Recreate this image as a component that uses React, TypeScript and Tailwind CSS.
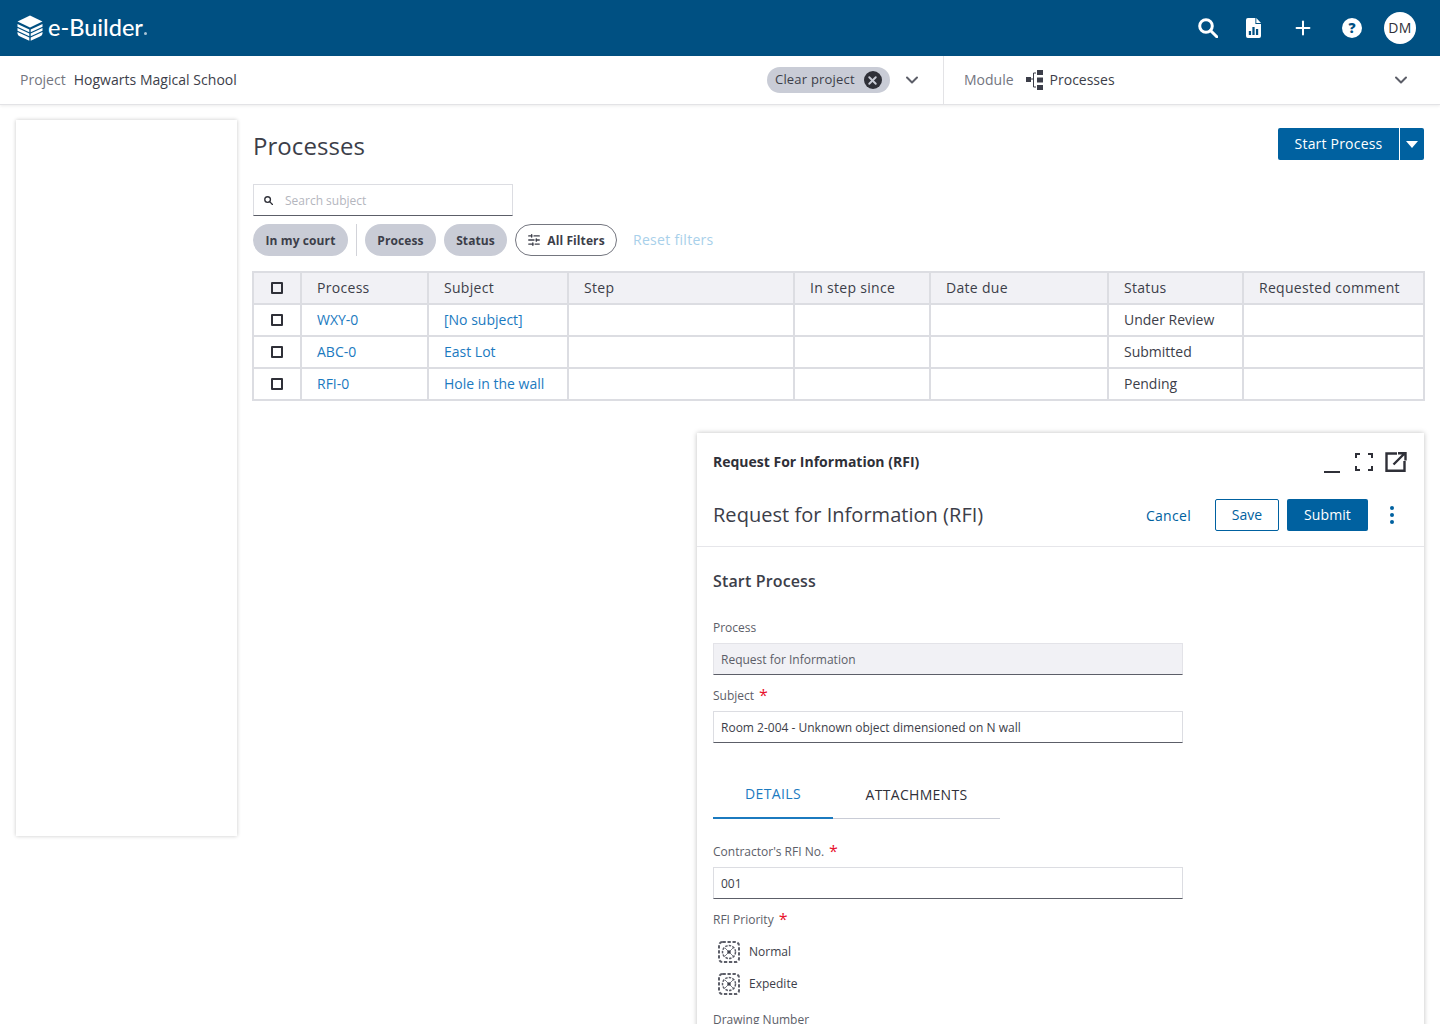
import { ChevronDown, Plus, SlidersHorizontal, X } from "lucide-react";

const rows = [
  { process: "WXY-0", subject: "[No subject]", status: "Under Review" },
  { process: "ABC-0", subject: "East Lot", status: "Submitted" },
  { process: "RFI-0", subject: "Hole in the wall", status: "Pending" },
];

const columns = ["Process", "Subject", "Step", "In step since", "Date due", "Status", "Requested comment"];
const colWidths = [48, 127, 140, 226, 136, 178, 135, 181];

function Logo() {
  return (
    <svg width="26" height="26" viewBox="0 0 26 26" fill="white">
      <path d="M13 0.500 L25.500 6.500 L13 12.500 L0.500 6.500 Z" />
      <path d="M0.500 9 L12.300 14.500 V17.200 L0.500 11.700 Z M25.500 9 L13.700 14.500 V17.200 L25.500 11.700 Z" />
      <path d="M0.500 13 L12.300 18.500 V21.200 L0.500 15.700 Z M25.500 13 L13.700 18.500 V21.200 L25.500 15.700 Z" />
      <path d="M0.500 17 L12.300 22.500 V25.700 L3 21.500 Q0.500 20.300 0.500 18.500 Z M25.500 17 L13.700 22.500 V25.700 L23 21.500 Q25.500 20.300 25.500 18.500 Z" />
    </svg>
  );
}

function SearchGlyph({ size, color }: { size: number; color: string }) {
  return (
    <svg width={size} height={size} viewBox="0 0 20 20" fill="none" stroke={color} strokeWidth="3" className="shrink-0">
      <circle cx="8" cy="8" r="6.300" />
      <path d="M12.500 12.500 L18.800 18.800" strokeLinecap="round" />
    </svg>
  );
}

function ReportIcon() {
  return (
    <svg width="15" height="20" viewBox="0 0 16 20" preserveAspectRatio="none" fill="white">
      <path d="M2 0 H10 V6 H16 V18 Q16 20 14 20 H2 Q0 20 0 18 V2 Q0 0 2 0 Z M11 0 L16 5 H11 Z" />
      <rect x="3" y="13" width="2.4" height="4" fill="#005082" />
      <rect x="6.800" y="9" width="2.4" height="8" fill="#005082" />
      <rect x="10.600" y="11" width="2.4" height="6" fill="#005082" />
    </svg>
  );
}

function ModuleIcon() {
  return (
    <svg width="17" height="20" viewBox="0 0 17 20" fill="#3c3e49">
      <rect x="0" y="7" width="5" height="5" />
      <rect x="11" y="0" width="6" height="5" />
      <rect x="11" y="7.500" width="6" height="5" />
      <rect x="11" y="15" width="6" height="5" />
      <path d="M5 9 H7 M10 3 H7.500 V17 H10" stroke="#3c3e49" fill="none" />
    </svg>
  );
}

function MissingIcon() {
  return (
    <svg width="22" height="22" viewBox="0 0 22 22" fill="none" stroke="#5c5e68" className="shrink-0">
      <rect x="1" y="1" width="20" height="20" rx="3.500" strokeWidth="2" strokeDasharray="3.300 1.700" />
      <circle cx="11" cy="11" r="6.500" strokeWidth="1.500" strokeDasharray="2.500 1.200" />
      <path d="M7 7 L15 15 M15 7 L7 15" strokeWidth="0.800" />
      <circle cx="11" cy="11" r="1.800" fill="#3c3e49" stroke="none" />
    </svg>
  );
}

function Checkbox() {
  return <span className="block w-3 h-3 mx-auto rounded-[1px] border-2 border-[#2f3038]" />;
}

function Required({ label }: { label: string }) {
  return (
    <div className="flex items-start h-[24px] text-[12px] leading-[24px] text-[#5c5e68]">
      {label}
      <span className="ml-[5px] text-[16px] leading-[22px] text-[#e8102c]">*</span>
    </div>
  );
}

export default function App() {
  return (
    <div className="h-[1024px] overflow-hidden bg-white text-[#3c3e49] font-['Open_Sans',sans-serif]">
      {/* Top bar */}
      <header className="h-14 bg-[#005082] flex items-center pl-[17px] pr-[24px] text-white">
        <Logo />
        <span className="ml-[5px] text-[23.5px] font-medium font-['Lato',sans-serif]">e-Builder</span>
        <span className="mt-[11px] ml-px w-[3px] h-[3px] rounded-full bg-[#a9c4d6]" />
        <div className="ml-auto flex items-center">
          <SearchGlyph size={20} color="white" />
          <span className="ml-[28px]"><ReportIcon /></span>
          <Plus size={22} strokeWidth={2.2} className="ml-[31px]" />
          <span className="ml-[28px] w-5 h-5 rounded-full bg-white text-[#005082] text-[14px] leading-5 font-extrabold text-center">?</span>
          <span className="ml-[22px] w-8 h-8 rounded-full bg-white text-[#2f3038] text-[14px] leading-8 font-medium tracking-[0.3px] text-center">DM</span>
        </div>
      </header>

      {/* Project / module bar */}
      <div className="h-[49px] flex items-stretch bg-white border-b border-[#e3e3e6] shadow-[0_1px_3px_rgba(0,0,0,0.08)] text-[14px]">
        <div className="w-[944px] flex items-center pl-5 border-r border-[#e3e3e6]">
          <span className="pb-[2px] text-[#74767f]">Project</span>
          <span className="ml-[8px] pb-[2px] tracking-[0.03px]">Hogwarts Magical School</span>
          <span className="ml-auto h-[26px] w-[123px] rounded-full bg-[#c9ccd6] flex items-center pl-2 text-[13px] font-medium tracking-[0.2px]">
            Clear project
            <span className="ml-[9px] w-[18px] h-[18px] rounded-full bg-[#2f3038] flex items-center justify-center text-[#c9ccd6]">
              <X size={13} strokeWidth={3.5} />
            </span>
          </span>
          <ChevronDown size={20} strokeWidth={2.4} className="ml-[12px] mr-[21px] text-[#5c5e68]" />
        </div>
        <div className="flex-1 flex items-center pl-5 pr-[29px]">
          <span className="pb-[2px] text-[#74767f]">Module</span>
          <span className="ml-3"><ModuleIcon /></span>
          <span className="ml-[7px] pb-[2px]">Processes</span>
          <ChevronDown size={20} strokeWidth={2.4} className="ml-auto text-[#5c5e68]" />
        </div>
      </div>

      <div className="flex items-start pl-4 pr-4 pt-[15px] gap-4">
        {/* Left panel */}
        <aside className="w-[221px] h-[716px] shrink-0 bg-white shadow-[0_0_4px_rgba(0,0,0,0.22)]" />

        <main className="flex-1 min-w-0">
          <div className="flex items-start pt-2">
            <h1 className="text-[24px] leading-[36px] tracking-[0.05px] font-normal">Processes</h1>
            <div className="ml-auto flex h-8 text-white text-[14px] font-medium">
              <button className="w-[121px] pb-[2px] bg-[#0061a0] rounded-l-[2px] tracking-[0.2px]">Start Process</button>
              <button className="ml-px w-6 bg-[#0061a0] rounded-r-[2px] flex items-center justify-center">
                <span className="w-0 h-0 border-x-[6px] border-x-transparent border-t-[7px] border-t-white" />
              </button>
            </div>
          </div>

          <div className="mt-[20px] w-[260px] h-8 flex items-center pl-[10px] border border-[#dcdde2] border-b-[#5c5e68] text-[12px] text-[#b4b6be]">
            <SearchGlyph size={9} color="#2f3038" />
            <span className="ml-[12px] pt-[2px]">Search subject</span>
          </div>

          <div className="mt-2 flex items-center h-8 text-[12px] font-bold tracking-[0.1px]">
            <span className="h-8 w-[95px] rounded-full bg-[#c9ccd6] leading-[34px] text-center">In my court</span>
            <span className="mx-2 w-px h-8 bg-[#d2d3d9]" />
            <span className="h-8 w-[71px] rounded-full bg-[#c9ccd6] leading-[34px] text-center">Process</span>
            <span className="ml-2 h-8 w-[63px] rounded-full bg-[#c9ccd6] leading-[34px] text-center">Status</span>
            <span className="ml-2 h-8 w-[102px] rounded-full border border-[#74767f] flex items-center justify-center gap-[6px]">
              <SlidersHorizontal size={14} strokeWidth={2.4} className="rotate-180" />
              <span className="pt-[2px]">All Filters</span>
            </span>
            <span className="ml-4 pb-[2px] text-[14px] font-medium tracking-[0.3px] text-[#a8d0ea]">Reset filters</span>
          </div>

          <table className="mt-[15px] -ml-px w-[1171px] table-fixed border-collapse text-[14px]">
            <colgroup>
              {colWidths.map((w, i) => (
                <col key={i} style={{ width: w }} />
              ))}
            </colgroup>
            <thead>
              <tr className="h-8 bg-[#f1f1f5]">
                <th className="border-2 border-[#dcdde2] font-normal"><Checkbox /></th>
                {columns.map((c) => (
                  <th key={c} className="border-2 border-[#dcdde2] pl-[15px] pb-[2px] text-left font-medium tracking-[0.3px]">{c}</th>
                ))}
              </tr>
            </thead>
            <tbody>
              {rows.map((r) => (
                <tr key={r.process} className="h-8">
                  <td className="border-2 border-[#dcdde2]"><Checkbox /></td>
                  <td className="border-2 border-[#dcdde2] pl-[15px] pb-[2px] text-[#1b7abf]">{r.process}</td>
                  <td className="border-2 border-[#dcdde2] pl-[15px] pb-[2px] text-[#1b7abf]">{r.subject}</td>
                  <td className="border-2 border-[#dcdde2]" />
                  <td className="border-2 border-[#dcdde2]" />
                  <td className="border-2 border-[#dcdde2]" />
                  <td className="border-2 border-[#dcdde2] pl-[15px] pb-[2px]">{r.status}</td>
                  <td className="border-2 border-[#dcdde2]" />
                </tr>
              ))}
            </tbody>
          </table>

          {/* Start process panel */}
          <section className="mt-[32px] ml-auto w-[727px] h-[640px] bg-white shadow-[0_0_5px_rgba(0,0,0,0.25)]">
            <div className="h-[114px] border-b border-[#e6e6ea] px-4">
              <div className="flex items-center h-[60px]">
                <h2 className="pb-[4px] text-[14px] font-bold text-[#2f3038]">Request For Information (RFI)</h2>
                <div className="ml-auto mr-px mb-[2px] flex items-center text-[#2f3038]">
                  <span className="mt-[20px] w-4 h-[2px] bg-[#2f3038]" />
                  <svg width="18" height="18" viewBox="0 0 18 18" fill="none" stroke="#2f3038" strokeWidth="2" className="ml-[15px]">
                    <path d="M1 5 V1 H5 M13 1 H17 V5 M17 13 V17 H13 M5 17 H1 V13" />
                  </svg>
                  <svg width="22" height="20" viewBox="0 0 22 20" fill="none" stroke="#2f3038" strokeWidth="2.4" className="ml-[12px]">
                    <path d="M12 1.500 H1.500 V18.800 H19.500 V9" />
                    <path d="M8.500 12.500 L20 1 M13 1.200 H20.500 V8.500" />
                  </svg>
                </div>
              </div>
              <div className="flex items-center h-8 mt-[6px]">
                <h3 className="text-[20px] tracking-[0.03px] font-normal">Request for Information (RFI)</h3>
                <div className="ml-auto flex items-center text-[14px] font-medium">
                  <span className="tracking-[0.3px] text-[#0061a0]">Cancel</span>
                  <span className="ml-6 w-16 h-8 border border-[#0061a0] rounded-[2px] text-[#0061a0] leading-[30px] text-center">Save</span>
                  <span className="ml-2 w-[81px] h-8 bg-[#0061a0] rounded-[2px] text-white leading-8 tracking-[0.1px] text-center">Submit</span>
                  <span className="ml-[22px] mr-[14px] flex flex-col gap-[3px]">
                    <span className="w-1 h-1 rounded-full bg-[#0061a0]" />
                    <span className="w-1 h-1 rounded-full bg-[#0061a0]" />
                    <span className="w-1 h-1 rounded-full bg-[#0061a0]" />
                  </span>
                </div>
              </div>
            </div>

            <div className="px-4">
              <h4 className="mt-[22px] text-[16px] leading-[24px] tracking-[0.15px] font-semibold">Start Process</h4>

              <div className="mt-[23px] h-[24px] text-[12px] leading-[24px] text-[#5c5e68]">Process</div>
              <div className="mt-[3px] w-[470px] h-8 bg-[#f1f1f5] border border-[#e3e3e8] border-b-[#5c5e68] pl-[7px] text-[12px] leading-[31px] text-[#5c5e68]">
                Request for Information
              </div>

              <div className="mt-[9px]"><Required label="Subject" /></div>
              <div className="mt-[3px] w-[470px] h-8 border border-[#dcdde2] border-b-[#5c5e68] pl-[7px] text-[12px] leading-[31px]">
                Room 2-004 - Unknown object dimensioned on N wall
              </div>

              <div className="mt-[20px] w-[287px] h-[56px] flex border-b border-[#c9ccd6] text-[14px]">
                <span className="w-[120px] h-[56px] pt-[7px] border-b-2 border-[#1b7abf] text-center leading-[48px] font-medium tracking-[0.4px] text-[#1b7abf]">DETAILS</span>
                <span className="w-[167px] pt-[8px] text-center leading-[48px] font-medium tracking-[0.3px] text-[#2f3038]">ATTACHMENTS</span>
              </div>

              <div className="mt-[21px]"><Required label="Contractor's RFI No." /></div>
              <div className="mt-[3px] w-[470px] h-8 border border-[#dcdde2] border-b-[#5c5e68] pl-[7px] text-[12px] leading-[31px]">
                001
              </div>

              <div className="mt-[9px]"><Required label="RFI Priority" /></div>
              <div className="mt-[4px] flex items-center h-8 pl-[5px] text-[12px]">
                <MissingIcon />
                <span className="ml-[9px]">Normal</span>
              </div>
              <div className="flex items-center h-8 pl-[5px] text-[12px]">
                <MissingIcon />
                <span className="ml-[9px]">Expedite</span>
              </div>
              <div className="mt-[8px] h-[24px] text-[12px] leading-[24px] text-[#5c5e68]">Drawing Number</div>
            </div>
          </section>
        </main>
      </div>
    </div>
  );
}
